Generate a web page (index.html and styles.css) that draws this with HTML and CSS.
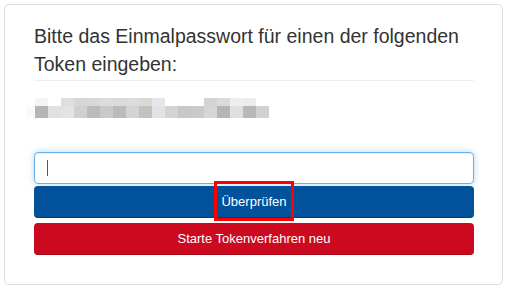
FILE: index.html
```html
<!DOCTYPE html>
<html lang="de">
<head>
<meta charset="utf-8">
<link rel="stylesheet" href="styles.css">
</head>
<body>
<div class="card">
  <h3 class="title">Bitte das Einmalpasswort für einen der folgenden Token eingeben:</h3>
  <hr class="rule">
  <div class="tokens">
    <div class="row row1"></div>
    <div class="row row2"></div>
  </div>
  <div class="field"><span class="caret"></span></div>
  <button class="btn btn-primary"><span>Überprüfen</span><span class="highlight"></span></button>
  <button class="btn btn-danger">Starte Tokenverfahren neu</button>
</div>
</body>
</html>
```

FILE: styles.css
```css
* { box-sizing: border-box; }
html, body { margin: 0; background: #fff; }
body {
  font-family: "Liberation Sans", Arial, sans-serif;
  color: #333;
  padding: 4px 5px 6px 4px;
}
.card {
  width: 499px;
  height: 281px;
  border: 1px solid #dddddd;
  border-radius: 5px;
  padding: 17px 28px 0 29px;
  display: flex;
  flex-direction: column;
}
.title {
  margin: 0;
  font-weight: normal;
  font-size: 19.5px;
  line-height: 28px;
  color: #333;
}
.rule {
  margin: 2px 0 0 0;
  border: 0;
  border-top: 1px solid #eeeeee;
  height: 0;
}
.tokens {
  margin-top: 17px;
  height: 20px;
  display: flex;
  flex-direction: column;
}
.row1 {
  height: 8px;
  margin-left: 1px;
  width: 234px;
  background: linear-gradient(to right,
    #f5f5f5 0 13px, #ffffff 13px 26px, #dedede 26px 39px, #d6d6d6 39px 52px,
    #d8d8d8 52px 65px, #dcdcdc 65px 78px, #dadada 78px 91px, #dcdcdc 91px 104px,
    #d9d9d9 104px 117px, #e6e6e8 117px 130px, #ffffff 130px 169px,
    #d4d4d4 169px 182px, #d8dcdf 182px 195px, #eeeeee 195px 208px,
    #ececec 208px 221px, #ffffff 221px 234px);
}
.row2 {
  height: 12px;
  margin-left: -7px;
  width: 242px;
  background: linear-gradient(to right,
    #fbfaf5 0 8px,
    #b7b5b3 8px 21px, #dfe1e3 21px 34px, #e3e3e1 34px 47px, #d3d0cc 47px 60px,
    #bbbbbb 60px 73px, #c7c9cb 73px 86px, #bdbab8 86px 99px, #d2d4d6 99px 112px,
    #c5c2be 112px 125px, #dfe3e6 125px 138px, #d3d3d3 138px 151px,
    #c8c8c4 151px 164px, #c9cacc 164px 177px, #d8d6d4 177px 190px,
    #b5b5b7 190px 203px, #e2e0dd 203px 216px, #b8b8b8 216px 229px,
    #d0d1d3 229px 242px);
}
.field {
  margin-top: 34px;
  height: 32px;
  border: 1px solid #66afe9;
  border-radius: 4px;
  box-shadow: inset 0 1px 1px rgba(0,0,0,.075), 0 0 6px rgba(102,175,233,.5);
  display: flex;
  align-items: center;
  padding-left: 12px;
}
.caret {
  display: inline-block;
  width: 1px;
  height: 16px;
  background: #555;
}
.btn {
  position: relative;
  display: flex;
  align-items: center;
  justify-content: center;
  width: 100%;
  height: 32px;
  border: 0;
  border-radius: 4px;
  color: #fff;
  font-family: "Liberation Sans", Arial, sans-serif;
  font-size: 13px;
  padding: 0;
}
.btn-primary {
  margin-top: 2px;
  background: #01529b;
  border-bottom: 1px solid #003f7a;
}
.btn-danger {
  margin-top: 5px;
  background: #cc0a1f;
  border-bottom: 1px solid #a80818;
}
.highlight {
  position: absolute;
  left: 50%;
  top: -5px;
  width: 80px;
  height: 40px;
  margin-left: -40px;
  border: 3px solid #ff0000;
}
```
